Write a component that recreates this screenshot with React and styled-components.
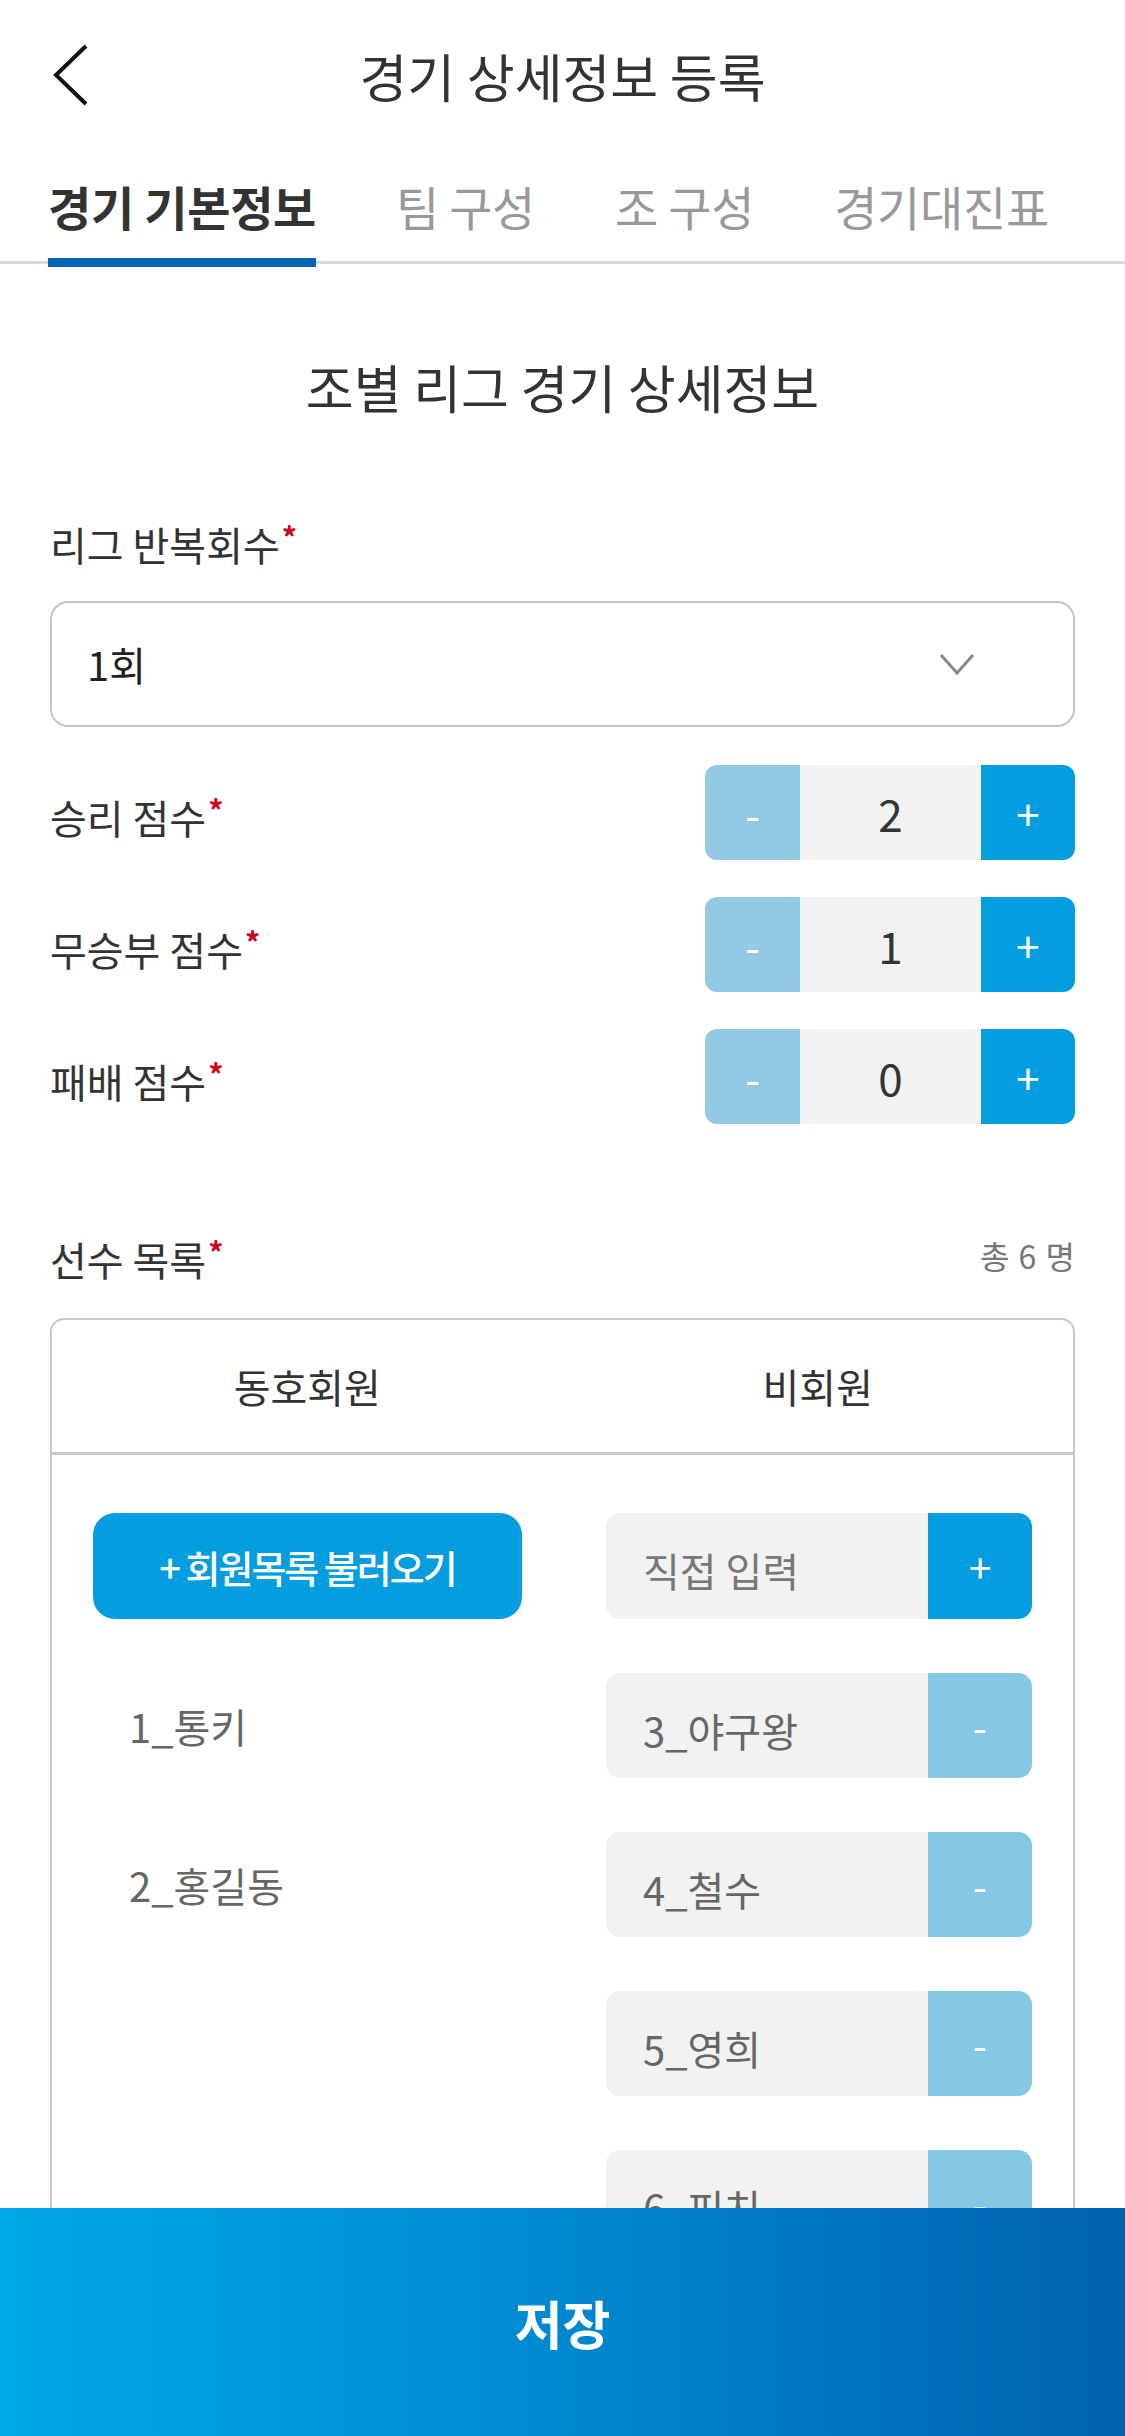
import React, { useState } from "react";
import styled, { createGlobalStyle, css } from "styled-components";

const GlobalStyle = createGlobalStyle`
  * {
    box-sizing: border-box;
  }
  body {
    margin: 0;
    background: #fff;
    color: #333;
    font-family: "Noto Sans CJK KR", "Noto Sans", sans-serif;
  }
  button {
    font-family: inherit;
    cursor: pointer;
  }
`;

const Header = styled.header`
  display: grid;
  grid-template-columns: 1fr auto 1fr;
  align-items: center;
  height: 150px;
`;
const BackButton = styled.button`
  justify-self: start;
  display: flex;
  margin-left: 52px;
  padding: 0;
  border: 0;
  background: none;
`;
const Title = styled.h1`
  margin: 0;
  font-size: 52px;
  font-weight: 400;
  color: #333;
`;

const TabBar = styled.nav`
  display: flex;
  gap: 80px;
  height: 114px;
  padding-left: 48px;
  border-bottom: 3px solid #dbdbdb;
`;
const Tab = styled.button`
  position: relative;
  padding: 0;
  border: 0;
  background: none;
  font-size: 47px;
  letter-spacing: -0.3px;
  font-weight: ${({ active }) => (active ? 700 : 400)};
  color: ${({ active }) => (active ? "#333" : "#999")};
  ${({ active }) =>
    active &&
    css`
      &::after {
        content: "";
        position: absolute;
        left: 0;
        right: 0;
        bottom: -6px;
        height: 9px;
        background: #0066b3;
      }
    `}
`;

const Main = styled.main`
  padding: 0 50px 260px;
`;
const SectionTitle = styled.h2`
  margin: 88px 0 0;
  text-align: center;
  font-size: 52px;
  line-height: 70px;
  font-weight: 400;
`;
const FieldLabel = styled.div`
  font-size: 40px;
  line-height: 56px;
  color: #333;
  margin-top: ${({ top }) => top || 0}px;
`;
const Required = styled.span`
  margin-left: 2px;
  color: #d0021b;
  font-size: 30px;
  font-weight: 700;
  vertical-align: 12px;
`;

const Select = styled.div`
  display: flex;
  align-items: center;
  justify-content: space-between;
  height: 126px;
  margin-top: 29px;
  padding: 0 98px 0 35px;
  border: 2.5px solid #c4c4c4;
  border-radius: 18px;
  font-size: 40px;
  color: #222;
`;

const ScoreList = styled.div`
  display: flex;
  flex-direction: column;
  gap: 37px;
  margin-top: 38px;
`;
const ScoreRow = styled.div`
  display: flex;
  align-items: center;
  justify-content: space-between;
`;
const Stepper = styled.div`
  display: grid;
  grid-template-columns: 95px 181px 94px;
  height: 95px;
  border-radius: 12px;
  overflow: hidden;
`;
const StepButton = styled.button`
  padding: 0;
  border: 0;
  color: #fff;
  font-size: 42px;
  background: ${({ kind }) => (kind === "minus" ? "#94c9e4" : "#039de0")};
`;
const StepValue = styled.div`
  display: flex;
  align-items: center;
  justify-content: center;
  background: #f2f2f2;
  font-size: 44px;
  color: #333;
`;

const PlayersHead = styled.div`
  display: flex;
  align-items: center;
  justify-content: space-between;
  margin-top: 99px;
`;
const Count = styled.span`
  font-size: 32px;
  color: #777;
  word-spacing: 2px;
`;
const PlayerBox = styled.div`
  margin-top: 31px;
  border: 2px solid #c8c8c8;
  border-radius: 14px;
`;
const BoxTabs = styled.div`
  display: grid;
  grid-template-columns: 1fr 1fr;
  align-items: center;
  height: 135px;
  border-bottom: 3px solid #c8c8c8;
  text-align: center;
  font-size: 40px;
  color: #333;
`;
const BoxBody = styled.div`
  display: grid;
  grid-template-columns: 429px 426px;
  column-gap: 84px;
  padding: 58px 41px 80px;
`;
const Column = styled.div`
  display: flex;
  flex-direction: column;
  gap: 54px;
`;
const LoadButton = styled.button`
  height: 106px;
  border: 0;
  border-radius: 22px;
  background: #039de0;
  color: #fff;
  font-size: 38px;
  font-weight: 500;
  letter-spacing: -2px;
`;
const MemberName = styled.div`
  display: flex;
  align-items: center;
  height: 105px;
  padding-left: 36px;
  font-size: 40px;
  color: #666;
`;
const EntryRow = styled.div`
  display: grid;
  grid-template-columns: 1fr 104px;
  height: ${({ tall }) => (tall ? 106 : 105)}px;
  border-radius: 14px;
  overflow: hidden;
`;
const EntryText = styled.div`
  display: flex;
  align-items: center;
  padding: 8px 0 0 37px;
  background: #f2f2f2;
  font-size: 40px;
  color: ${({ placeholder }) => (placeholder ? "#777" : "#666")};
`;
const EntryButton = styled.button`
  padding: 0;
  border: 0;
  color: #fff;
  font-size: 40px;
  background: ${({ kind }) => (kind === "minus" ? "#84c8e6" : "#039de0")};
`;

const SaveBar = styled.button`
  position: fixed;
  left: 0;
  right: 0;
  bottom: 0;
  height: 228px;
  border: 0;
  background: linear-gradient(90deg, #00a8e9 0%, #0090d6 40%, #0062b0 100%);
  color: #fff;
  font-size: 52px;
  font-weight: 700;
`;

const tabs = ["경기 기본정보", "팀 구성", "조 구성", "경기대진표"];
const members = ["1_통키", "2_홍길동"];
const guests = ["3_야구왕", "4_철수", "5_영희", "6_피치"];

const BackIcon = () => (
  <svg width="38" height="62" viewBox="0 0 38 62">
    <polyline
      points="34,2 4,31 34,60"
      fill="none"
      stroke="#111"
      strokeWidth="4"
      strokeLinejoin="miter"
    />
  </svg>
);

const ChevronDown = () => (
  <svg width="36" height="24" viewBox="0 0 36 24">
    <polyline points="2,3 18,21 34,3" fill="none" stroke="#888" strokeWidth="3" />
  </svg>
);

const App = () => {
  const [scores, setScores] = useState({ win: 2, draw: 1, lose: 0 });

  const change = (key, diff) => {
    setScores({ ...scores, [key]: Math.max(0, scores[key] + diff) });
  };

  const scoreRows = [
    { key: "win", label: "승리 점수" },
    { key: "draw", label: "무승부 점수" },
    { key: "lose", label: "패배 점수" },
  ];

  return (
    <>
      <GlobalStyle />
      <Header>
        <BackButton>
          <BackIcon />
        </BackButton>
        <Title>경기 상세정보 등록</Title>
      </Header>
      <TabBar>
        {tabs.map((name, i) => (
          <Tab key={name} active={i === 0}>
            {name}
          </Tab>
        ))}
      </TabBar>
      <Main>
        <SectionTitle>조별 리그 경기 상세정보</SectionTitle>
        <FieldLabel top={86}>
          리그 반복회수<Required>*</Required>
        </FieldLabel>
        <Select>
          1회
          <ChevronDown />
        </Select>
        <ScoreList>
          {scoreRows.map(({ key, label }) => (
            <ScoreRow key={key}>
              <FieldLabel>
                {label}
                <Required>*</Required>
              </FieldLabel>
              <Stepper>
                <StepButton kind="minus" onClick={() => change(key, -1)}>
                  -
                </StepButton>
                <StepValue>{scores[key]}</StepValue>
                <StepButton kind="plus" onClick={() => change(key, 1)}>
                  +
                </StepButton>
              </Stepper>
            </ScoreRow>
          ))}
        </ScoreList>
        <PlayersHead>
          <FieldLabel>
            선수 목록<Required>*</Required>
          </FieldLabel>
          <Count>총 6 명</Count>
        </PlayersHead>
        <PlayerBox>
          <BoxTabs>
            <span>동호회원</span>
            <span>비회원</span>
          </BoxTabs>
          <BoxBody>
            <Column>
              <LoadButton>+ 회원목록 불러오기</LoadButton>
              {members.map((name) => (
                <MemberName key={name}>{name}</MemberName>
              ))}
            </Column>
            <Column>
              <EntryRow tall>
                <EntryText placeholder>직접 입력</EntryText>
                <EntryButton kind="plus">+</EntryButton>
              </EntryRow>
              {guests.map((name) => (
                <EntryRow key={name}>
                  <EntryText>{name}</EntryText>
                  <EntryButton kind="minus">-</EntryButton>
                </EntryRow>
              ))}
            </Column>
          </BoxBody>
        </PlayerBox>
      </Main>
      <SaveBar>저장</SaveBar>
    </>
  );
};

export default App;
